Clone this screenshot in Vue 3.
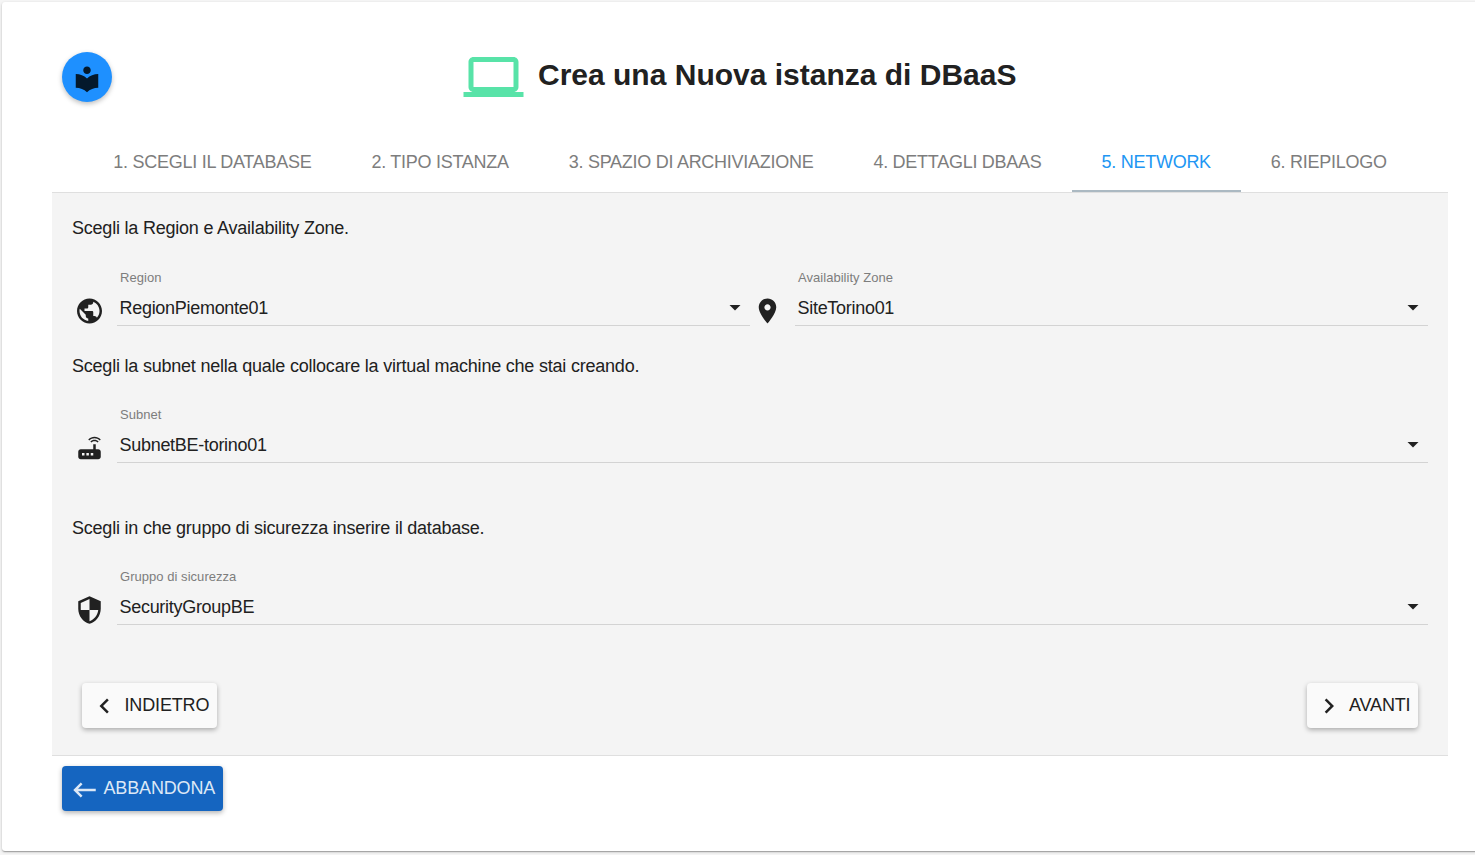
<script setup>
const icons = {
  library: 'M12 11.55C9.64 9.35 6.48 8 3 8v11c3.48 0 6.64 1.35 9 3.55 2.36-2.19 5.52-3.55 9-3.55V8c-3.48 0-6.64 1.35-9 3.55zM12 8c1.66 0 3-1.34 3-3s-1.34-3-3-3-3 1.34-3 3 1.34 3 3 3z',
  computer: 'M20 18c1.1 0 1.99-.9 1.99-2L22 6c0-1.1-.9-2-2-2H4c-1.1 0-2 .9-2 2v10c0 1.1.9 2 2 2H0v2h24v-2h-4zM4 6h16v10H4V6z',
  globe: 'M12 2C6.48 2 2 6.48 2 12s4.48 10 10 10 10-4.48 10-10S17.52 2 12 2zm-1 17.93c-3.95-.49-7-3.85-7-7.93 0-.62.08-1.21.21-1.79L9 15v1c0 1.1.9 2 2 2v1.93zm6.9-2.54c-.26-.81-1-1.39-1.9-1.39h-1v-3c0-.55-.45-1-1-1H8v-2h2c.55 0 1-.45 1-1V7h2c1.1 0 2-.9 2-2v-.41c2.93 1.19 5 4.06 5 7.41 0 2.08-.8 3.97-2.1 5.39z',
  place: 'M12 2C8.13 2 5 5.13 5 9c0 5.25 7 13 7 13s7-7.75 7-13c0-3.87-3.13-7-7-7zm0 9.5c-1.38 0-2.5-1.12-2.5-2.5s1.12-2.5 2.5-2.5 2.5 1.12 2.5 2.5-1.12 2.5-2.5 2.5z',
  router: 'M20.2 5.9l.8-.8C19.6 3.7 17.8 3 16 3s-3.6.7-5 2.1l.8.8C13 4.8 14.5 4.2 16 4.2s3 .6 4.2 1.7zm-.9.8c-.9-.9-2.1-1.4-3.3-1.4s-2.4.5-3.3 1.4l.8.8c.7-.7 1.6-1 2.5-1 .9 0 1.8.3 2.5 1l.8-.8zM19 13h-2V9h-2v4H5c-1.1 0-2 .9-2 2v4c0 1.1.9 2 2 2h14c1.1 0 2-.9 2-2v-4c0-1.1-.9-2-2-2zM8 18H6v-2h2v2zm3.5 0h-2v-2h2v2zm3.5 0h-2v-2h2v2z',
  shield: 'M12 1L3 5v6c0 5.55 3.84 10.74 9 12 5.16-1.26 9-6.45 9-12V5l-9-4zm0 10.99h7c-.53 4.12-3.28 7.79-7 8.94V12H5V6.3l7-3.11v8.8z',
  left: 'M15.41 16.59L10.83 12l4.58-4.59L14 6l-6 6 6 6z',
  right: 'M8.59 16.59L13.17 12 8.59 7.41 10 6l6 6-6 6z',
  back: 'M21 11H6.83l3.58-3.59L9 6l-6 6 6 6 1.41-1.41L6.83 13H21z',
}
const tabs = ['1. Scegli il Database', '2. Tipo Istanza', '3. Spazio di Archiviazione', '4. Dettagli DBaaS', '5. Network', '6. Riepilogo']
const active = 4
const groups = [
  { text: 'Scegli la Region e Availability Zone.', fields: [
    { icon: 'globe', label: 'Region', value: 'RegionPiemonte01' },
    { icon: 'place', label: 'Availability Zone', value: 'SiteTorino01' },
  ] },
  { text: 'Scegli la subnet nella quale collocare la virtual machine che stai creando.', fields: [
    { icon: 'router', label: 'Subnet', value: 'SubnetBE-torino01' },
  ] },
  { text: 'Scegli in che gruppo di sicurezza inserire il database.', fields: [
    { icon: 'shield', label: 'Gruppo di sicurezza', value: 'SecurityGroupBE' },
  ] },
]
</script>

<template>
  <div class="page">
    <main class="card">
      <header class="header">
        <button class="fab"><svg class="icon" viewBox="0 0 24 24"><path :d="icons.library" /></svg></button>
        <svg class="logo" viewBox="-0.2 0 24 24"><path :d="icons.computer" /></svg>
        <h1>Crea una Nuova istanza di DBaaS</h1>
      </header>
      <nav class="tabs">
        <div v-for="(t, i) in tabs" :key="t" class="tab" :class="{ active: i === active }">{{ t }}</div>
      </nav>
      <section class="panel">
        <div v-for="g in groups" :key="g.text" class="group">
          <p>{{ g.text }}</p>
          <div class="fields">
            <div v-for="f in g.fields" :key="f.label" class="field">
              <svg class="icon" viewBox="-0.4 0 24 24"><path :d="icons[f.icon]" /></svg>
              <div class="control">
                <label>{{ f.label }}</label>
                <div class="select"><span>{{ f.value }}</span><svg class="caret" viewBox="0 0 12 6"><path d="M.5 0h11L6 5.6z" /></svg></div>
              </div>
            </div>
          </div>
        </div>
        <div class="actions">
          <button class="btn"><svg class="icon" viewBox="0.4 0 24 24"><path :d="icons.left" /></svg><span>INDIETRO</span></button>
          <button class="btn next"><svg class="icon" viewBox="0 0 24 24"><path :d="icons.right" /></svg><span>AVANTI</span></button>
        </div>
      </section>
      <button class="btn primary"><svg class="icon" viewBox="0.4 0 24 24"><path :d="icons.back" /></svg><span>ABBANDONA</span></button>
    </main>
  </div>
</template>

<style>
body { background: #f5f5f5; overflow: hidden; }
</style>
<style scoped>
* { box-sizing: border-box; }
.page { height: 855px; padding: 2px 0 4px 2px; overflow: hidden; font-family: "Liberation Sans", Arial, sans-serif; font-size: 18px; color: #212121; }
.card { width: 1496px; height: 849px; padding: 50px; background: #fff; border-radius: 3px; box-shadow: 0 1px 3px rgba(0,0,0,.2), 0 1px 1px rgba(0,0,0,.14), 0 2px 1px -1px rgba(0,0,0,.12); }
button { border: 0; font: inherit; color: inherit; }
.icon { display: block; width: 30px; height: 30px; flex: none; fill: currentColor; }
.header { display: flex; width: 1396px; height: 80px; padding-left: 10px; }
.fab { width: 50px; height: 50px; padding: 12px 10px 8px; border-radius: 50%; background: #1e90ff; color: #04192c; box-shadow: 0 2px 5px rgba(0,0,0,.26); }
.logo { width: 60px; height: 60px; margin: -5px 0 0 351px; fill: #58e3a8; overflow: visible; }
h1 { margin: 5px 0 0 15px; font-size: 30px; line-height: 36px; white-space: nowrap; }
.tabs { display: flex; justify-content: center; width: 1396px; height: 61px; border-bottom: 1px solid #dfdfdf; }
.tab { padding: 15px 30px 0; height: 60px; line-height: 30px; text-transform: uppercase; white-space: nowrap; color: #7d7d7d; letter-spacing: -.27px; }
.tab.active { color: #2196f3; border-bottom: 2px solid #abb9c2; }
.panel { width: 1396px; height: 563px; padding: 20px; background: #f4f4f4; border-bottom: 1px solid #dfdfdf; }
.group { height: 138px; }
.group:nth-child(2) { height: 162px; }
.group:nth-child(3) { height: 170px; }
p { margin: 0; line-height: 30px; letter-spacing: -.215px; }
.group + .group p { margin-bottom: -1px; }
.fields { display: flex; }
.field { display: flex; flex: 1; padding-left: 2px; }
.field > .icon { margin-top: 53px; }
.control { flex: 1; margin-left: 13px; padding-top: 25px; }
label { display: block; padding-left: 3px; font-size: 13px; line-height: 20px; letter-spacing: .04px; color: #7d7d7d; }
.select { display: flex; align-items: center; justify-content: space-between; height: 38px; padding: 2px 9px 0 2.5px; border-bottom: 1px solid #d3d3d3; letter-spacing: -.29px; }
.select span { padding-top: 2px; }
.caret { width: 12px; height: 6px; fill: #212121; }
.actions { display: flex; justify-content: space-between; padding: 0 10px; }
.btn { display: flex; align-items: center; width: 135px; height: 45px; padding: 0 7.5px; border-radius: 4px; background: #fafafa; box-shadow: 0 2px 5px rgba(0,0,0,.3); letter-spacing: -.15px; white-space: nowrap; }
.btn .icon { margin-top: 1px; }
.btn span { margin-left: 5px; }
.btn.next { width: 111px; padding: 0 8px 0 7px; }
.btn.primary { width: 161px; margin: 10px 0 0 10px; background: #1565c0; color: #dce8f6; }
.primary .icon { margin-top: 2px; }
.btn.primary span { margin-left: 4px; }
</style>
